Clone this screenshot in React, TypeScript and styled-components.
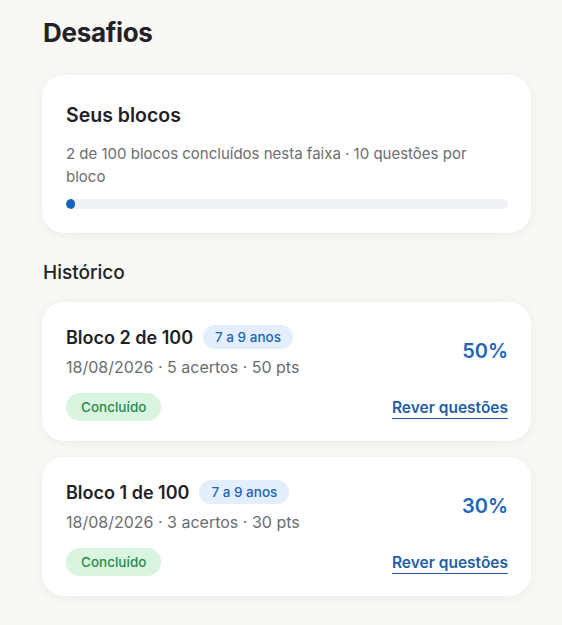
import styled, { createGlobalStyle } from "styled-components";

const GlobalStyle = createGlobalStyle`
  html, body {
    margin: 0;
    padding: 0;
    background: #f9f8f5;
    font-family: Inter, "Noto Sans", sans-serif;
    color: #1f2227;
  }
`;

const Page = styled.main`
  padding: 14px 31px 30px 42px;
`;

const Title = styled.h1`
  font-size: 26px;
  font-weight: 700;
  margin: 0 0 23px 1px;
  line-height: 38px;
  letter-spacing: -0.3px;
`;

const Card = styled.section`
  background: #ffffff;
  border-radius: 22px;
  box-shadow: 0 2px 12px rgba(0, 0, 0, 0.06);
  padding: 23px 23px 20px 24px;
`;

const SummaryCard = styled(Card)`
  padding-top: 27px;
  padding-bottom: 24px;
`;

const CardTitle = styled.h2`
  margin: 0 0 14px;
  font-size: 19.5px;
  font-weight: 600;
  line-height: 26px;
`;

const Sub = styled.p`
  margin: 0;
  max-width: 430px;
  color: #6b6d70;
  font-size: 15px;
  line-height: 23px;
`;

const Track = styled.div`
  margin-top: 11px;
  height: 10px;
  border-radius: 5px;
  background: #eef2f7;
  overflow: hidden;
`;

const Fill = styled.div`
  height: 100%;
  border-radius: 5px;
  background: #1565c0;
`;

const SectionTitle = styled.h3`
  margin: 27px 0 16px 1px;
  font-size: 19px;
  font-weight: 500;
  line-height: 26px;
`;

const List = styled.div`
  display: flex;
  flex-direction: column;
  gap: 16px;
`;

const Top = styled.div`
  display: flex;
  align-items: center;
  justify-content: space-between;
`;

const Info = styled.div`
  display: flex;
  flex-direction: column;
  gap: 8px;
`;

const TitleRow = styled.div`
  display: flex;
  align-items: center;
  gap: 10px;
`;

const BlockName = styled.span`
  font-size: 18px;
  font-weight: 600;
`;

const Badge = styled.span`
  background: #e3effd;
  color: #1e63b8;
  font-size: 13.5px;
  font-weight: 500;
  border-radius: 12px;
  padding: 0 12px;
  line-height: 24px;
`;

const Meta = styled.span`
  color: #6b6d70;
  font-size: 16px;
  line-height: 20px;
`;

const Percent = styled.span`
  color: #2166b5;
  font-size: 20px;
  font-weight: 600;
`;

const Bottom = styled.div`
  display: flex;
  align-items: center;
  justify-content: space-between;
  margin-top: 16px;
`;

const Chip = styled.span`
  background: #d9f5e0;
  color: #2e8a4a;
  font-size: 13.5px;
  font-weight: 500;
  border-radius: 14px;
  padding: 0 15px;
  line-height: 28px;
`;

const ReviewLink = styled.a`
  color: #1f5fa8;
  font-size: 15.5px;
  font-weight: 600;
  text-decoration: underline;
  text-underline-offset: 5px;
  text-decoration-thickness: 1px;
  cursor: pointer;
`;

const history = [
  { n: 2, date: "18/08/2026", hits: 5, pts: 50, pct: 50 },
  { n: 1, date: "18/08/2026", hits: 3, pts: 30, pct: 30 },
];

export default function App() {
  const done = 2;
  const total = 100;
  return (
    <>
      <GlobalStyle />
      <Page>
        <Title>Desafios</Title>
        <SummaryCard>
          <CardTitle>Seus blocos</CardTitle>
          <Sub>{`${done} de ${total} blocos concluídos nesta faixa · 10 questões por bloco`}</Sub>
          <Track>
            <Fill style={{ width: `${(done / total) * 100}%` }} />
          </Track>
        </SummaryCard>
        <SectionTitle>Histórico</SectionTitle>
        <List>
          {history.map((h) => (
            <Card key={h.n}>
              <Top>
                <Info>
                  <TitleRow>
                    <BlockName>{`Bloco ${h.n} de 100`}</BlockName>
                    <Badge>7 a 9 anos</Badge>
                  </TitleRow>
                  <Meta>{`${h.date} · ${h.hits} acertos · ${h.pts} pts`}</Meta>
                </Info>
                <Percent>{`${h.pct}%`}</Percent>
              </Top>
              <Bottom>
                <Chip>Concluído</Chip>
                <ReviewLink>Rever questões</ReviewLink>
              </Bottom>
            </Card>
          ))}
        </List>
      </Page>
    </>
  );
}
